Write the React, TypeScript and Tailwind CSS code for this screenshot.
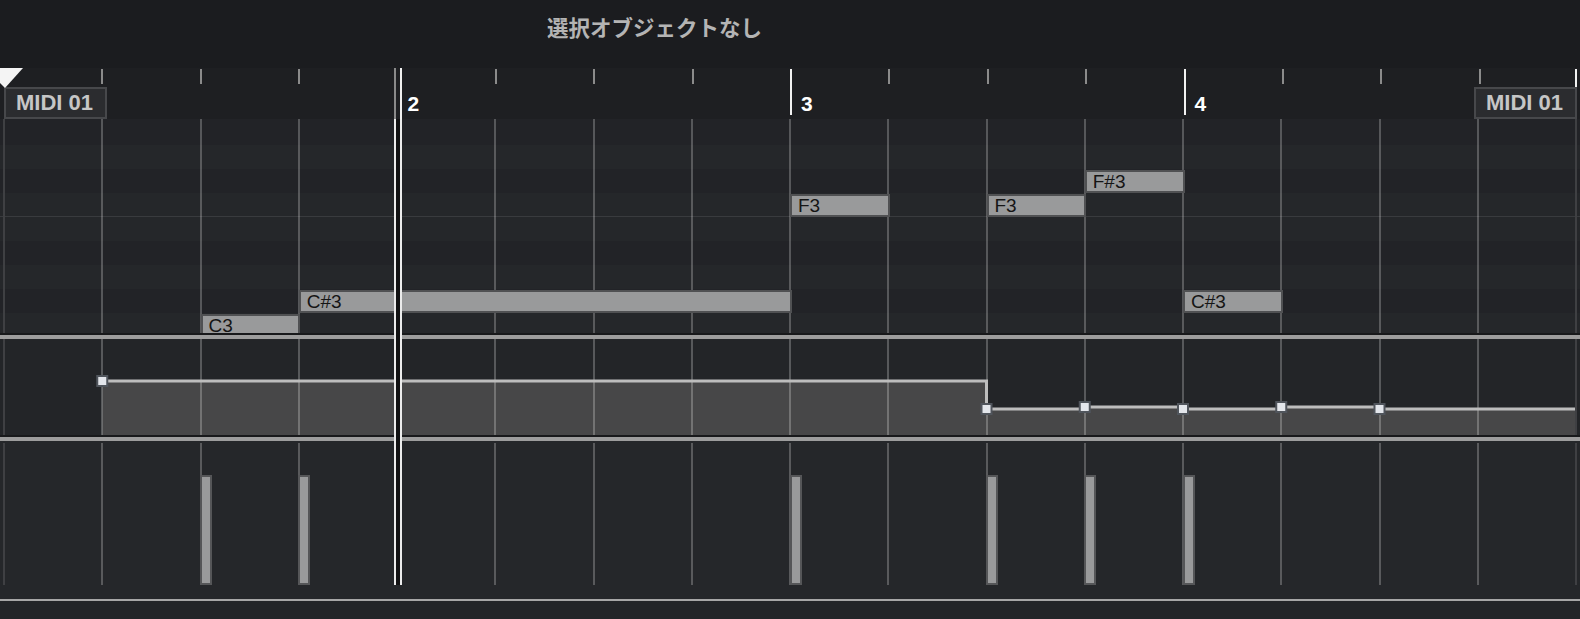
const BEAT = 98.25;
const beatX = (i: number) => 4 + i * BEAT;

const BEATS = Array.from({ length: 16 }, (_, i) => i);

// piano rows from top (G#3 is cut by the ruler) down to C3
const rows = [
  { name: 'G#3', top: 0, cls: 'h-[26px] bg-[#222327]' },
  { name: 'G3', top: 26, cls: 'h-[24px] bg-[#25272a]' },
  { name: 'F#3', top: 50, cls: 'h-[24px] bg-[#222327]' },
  { name: 'F3', top: 74, cls: 'h-[24px] bg-[#25272a] border-b border-[#393b3e]' },
  { name: 'E3', top: 98, cls: 'h-[24px] bg-[#25272a]' },
  { name: 'D#3', top: 122, cls: 'h-[24px] bg-[#222327]' },
  { name: 'D3', top: 146, cls: 'h-[24px] bg-[#25272a]' },
  { name: 'C#3', top: 170, cls: 'h-[24px] bg-[#222327]' },
  { name: 'C3', top: 194, cls: 'h-[20px] bg-[#25272a]' },
];

const rowTop = (name: string) => rows.find((r) => r.name === name)!.top;

const notes = [
  { pitch: 'C3', start: 2, len: 1 },
  { pitch: 'C#3', start: 3, len: 5 },
  { pitch: 'F3', start: 8, len: 1 },
  { pitch: 'F3', start: 10, len: 1 },
  { pitch: 'F#3', start: 11, len: 1 },
  { pitch: 'C#3', start: 12, len: 1 },
];

const velocityBeats = [2, 3, 8, 10, 11, 12];

// controller points: beat index and y inside the lane
const ccPoints = [
  { beat: 1, y: 42 },
  { beat: 10, y: 70 },
  { beat: 11, y: 68 },
  { beat: 12, y: 70 },
  { beat: 13, y: 68 },
  { beat: 14, y: 70 },
];
const CC_END = 1575;

function stepPath() {
  let d = `M${beatX(ccPoints[0].beat)} ${ccPoints[0].y}`;
  for (let k = 1; k < ccPoints.length; k++) {
    d += ` H${beatX(ccPoints[k].beat)} V${ccPoints[k].y}`;
  }
  return d + ` H${CC_END}`;
}

function GridLines() {
  return (
    <div className="pointer-events-none absolute inset-y-0 left-[3px] flex w-[1574px]">
      {BEATS.map((i) => (
        <div
          key={i}
          className={
            i === 0
              ? 'flex-1 border-l-2 border-[#3f4043]'
              : i === 15
                ? 'flex-1 border-l-2 border-r-2 border-l-white/[0.24] border-r-[#3f4043]'
                : 'flex-1 border-l-2 border-white/[0.24]'
          }
        />
      ))}
    </div>
  );
}

function Separator() {
  return (
    <>
      <div className="h-[2px] bg-[#18191b]" />
      <div className="h-[4px] bg-[#9d9d9d]" />
    </>
  );
}

function RegionLabel({ className }: { className: string }) {
  return (
    <div
      className={`absolute top-[19px] h-[32px] w-[103px] border-2 border-[#47484b] bg-[#2b2c2f] pl-[10px] pt-[3px] text-[22px] font-bold leading-none text-[#c6c6c6] ${className}`}
    >
      MIDI 01
    </div>
  );
}

function Ruler() {
  return (
    <div className="relative h-[51px] bg-[#1e1f22]">
      <div className="absolute inset-y-0 left-[3px] flex w-[1574px]">
        {BEATS.map((i) => {
          const bar = i % 4 === 0;
          return (
            <div key={i} className="relative flex-1">
              {!bar && <div className="mt-[1px] h-[15px] w-[2px] bg-[#8b8b8b]" />}
              {bar && i > 4 && <div className="mt-[1px] h-[46px] w-[2px] bg-[#f2f2f2]" />}
              {bar && i > 0 && (
                <span className="absolute left-[11px] top-[25px] text-[21px] font-bold leading-none text-white">
                  {i / 4 + 1}
                </span>
              )}
            </div>
          );
        })}
      </div>
      <div className="absolute left-[1575px] top-[1px] h-[18px] w-[2px] bg-[#f2f2f2]" />
      <RegionLabel className="left-[4px]" />
      <RegionLabel className="left-[1474px]" />
      <svg className="absolute left-0 top-0" width="24" height="21" viewBox="0 0 24 21">
        <polygon points="0,0 23,0 5,20 0,15" fill="#f4f4f4" />
      </svg>
    </div>
  );
}

function NoteLane() {
  return (
    <div className="relative h-[214px] overflow-hidden">
      {rows.map((r) => (
        <div key={r.name} className={r.cls} />
      ))}
      <GridLines />
      {notes.map((n, k) => (
        <div
          key={k}
          className="absolute h-[23px] overflow-hidden whitespace-nowrap border-2 border-[#505153] bg-[#999a9b] pl-[6px] text-[19px] leading-none text-[#151515]"
          style={{ left: beatX(n.start), width: n.len * BEAT + 1.5, top: rowTop(n.pitch) + 1 }}
        >
          {n.pitch}
        </div>
      ))}
    </div>
  );
}

function ControllerLane() {
  const path = stepPath();
  const first = beatX(ccPoints[0].beat);
  return (
    <div className="relative h-[96px] bg-[#232528]">
      <svg className="absolute inset-0" width="1580" height="96">
        <path d={`${path} V96 H${first} Z`} fill="#474748" />
      </svg>
      <GridLines />
      <svg className="absolute inset-0" width="1580" height="96">
        <path d={path} fill="none" stroke="#bdbdbd" strokeWidth="3" />
        {ccPoints.map((p) => (
          <rect
            key={p.beat}
            x={beatX(p.beat) - 5}
            y={p.y - 5}
            width="10"
            height="10"
            fill="#e3e6eb"
            stroke="#50555c"
            strokeWidth="2"
          />
        ))}
      </svg>
    </div>
  );
}

function VelocityLane() {
  return (
    <div className="relative h-[158px] bg-[#25272a]">
      <div className="absolute inset-x-0 top-[2px] h-[142px]">
        <GridLines />
      </div>
      {velocityBeats.map((b) => (
        <div
          key={b}
          className="absolute top-[34px] h-[110px] w-[12px] border-2 border-[#555658] bg-[#999a9b]"
          style={{ left: beatX(b) - 0.5 }}
        />
      ))}
    </div>
  );
}

export default function App() {
  return (
    <div className="relative h-[619px] w-[1580px] overflow-hidden bg-[#1b1c1f] font-['Liberation_Sans',Arial,sans-serif]">
      <div className="h-[68px] pl-[547px] pt-[15px]">
        <span className="font-['Noto_Sans_CJK_JP',sans-serif] text-[21.5px] font-bold leading-[24px] text-[#b4b4b4]">
          選択オブジェクトなし
        </span>
      </div>
      <Ruler />
      <NoteLane />
      <Separator />
      <ControllerLane />
      <Separator />
      <VelocityLane />
      <div className="h-[2px] bg-[#a7a7a7]" />
      <div className="h-[18px] bg-[#232528]" />

      {/* playhead */}
      <div className="absolute left-[394px] top-[68px] flex h-[51px] w-[8px] justify-between">
        <div className="w-[2px] bg-[#8a8a8a]" />
        <div className="w-[2px] bg-[#f0f0f0]" />
      </div>
      <div className="absolute left-[394px] top-[119px] h-[466px] w-[8px] border-x-2 border-[#ececec] bg-[#121213]" />
    </div>
  );
}
